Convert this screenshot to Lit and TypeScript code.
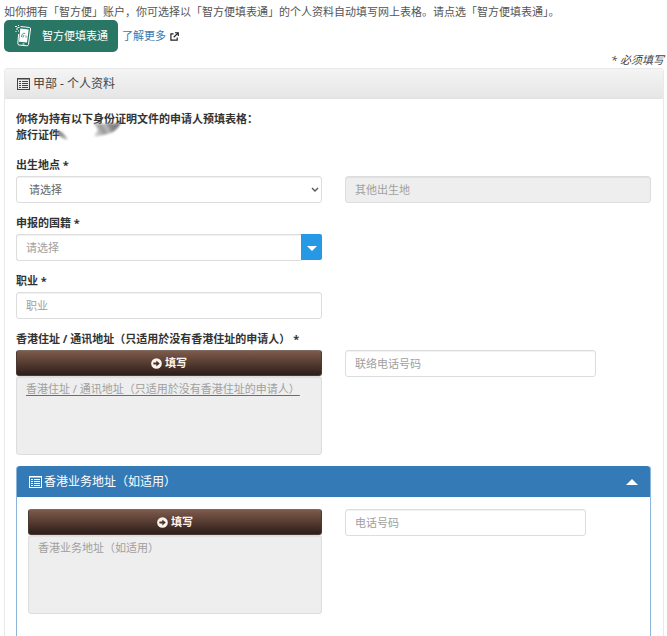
import { LitElement, html, css, svg } from "lit";
import { customElement, property, state } from "lit/decorators.js";

const listIcon = html`<svg class="icon" viewBox="0 0 13 12" width="13" height="12" aria-hidden="true">
  <rect x="0.5" y="0.5" width="12" height="11" fill="none" stroke="currentColor"></rect>
  <path d="M1 1.5h11" stroke="currentColor" opacity="0.5"></path>
  <path d="M2 3.5h2M5 3.5h6M2 5.5h2M5 5.5h6M2 7.5h2M5 7.5h6M2 9.5h2M5 9.5h6" stroke="currentColor"></path>
</svg>`;

@customElement("fill-button")
export class FillButton extends LitElement {
  static styles = css`
    :host { display: block; }
    .fill {
      display: flex; align-items: center; justify-content: center; gap: 3px;
      box-sizing: border-box; width: 100%; height: 26px; padding: 0;
      border: 1px solid #4b3a33; border-top-color: #7d6a60; border-radius: 3px;
      background: linear-gradient(#7d5a4c, #563c31 50%, #2c1e19);
      color: #fff5ee; font: bold 11px/16px "Noto Sans", "Noto Sans CJK SC", sans-serif;
      cursor: pointer;
    }
  `;
  render() {
    return html`<button class="fill" type="button">
      <svg viewBox="0 0 12 12" width="11" height="11" aria-hidden="true">
        <circle cx="6" cy="6" r="5.8" fill="currentColor"></circle>
        <path d="M2.6 4.9h3.2V2.8L9.6 6 5.8 9.2V7.1H2.6z" fill="#4b342b"></path>
      </svg>填写</button>`;
  }
}

@customElement("app-root")
export class AppRoot extends LitElement {
  @property() section = "甲部 - 个人资料";
  @state() private open = true;

  static styles = css`
    :host {
      display: block; box-sizing: border-box; height: 100vh; overflow: hidden;
      padding: 4px 3px 0 4px; background: #fff; color: #555;
      font: 11px/16px "Noto Sans", "Noto Sans CJK SC", sans-serif;
    }
    *, *::before { box-sizing: border-box; }
    p, h1, h2 { margin: 0; }
    input, textarea, select, button { font: inherit; }
    .actions { display: flex; align-items: center; gap: 4px; }
    .smart {
      display: flex; align-items: center; gap: 10px; height: 32px; padding: 0 10px;
      border: 0; border-radius: 5px; background: #2a7665; color: #fff; cursor: pointer;
    }
    .more { display: flex; align-items: center; gap: 4px; color: #3a78b0; text-decoration: none; }
    .required { text-align: right; font-style: italic; color: #444; }
    .panel { border: 1px solid #e9e9e9; border-radius: 3px; }
    .head {
      display: flex; align-items: center; gap: 3px; height: 30px; padding: 0 12px;
      border-bottom: 1px solid #e2e2e2; background: linear-gradient(#f4f4f4, #e6e6e6);
      font-size: 12px; font-weight: normal; color: #444;
    }
    .icon { flex: none; }
    .body { padding: 12px 12px 0 11px; }
    .notice { position: relative; margin-bottom: 14px; font-weight: bold; color: #333; }
    .smudge { position: absolute; left: 36px; top: 5px; }
    .grid { display: grid; grid-template-columns: 1fr 1fr; column-gap: 23px; }
    .field { margin-bottom: 12px; }
    .end { align-self: end; }
    .label { display: block; height: 19px; font-weight: bold; color: #333; }
    .control {
      display: block; width: 100%; height: 27px; padding: 0 9px; margin: 0;
      border: 1px solid #ddd; border-radius: 3px; background: #fff; color: #666;
      box-shadow: inset 0 1px 1px rgba(0, 0, 0, 0.06);
    }
    .control::placeholder { color: #a0a0a0; opacity: 1; }
    .control:disabled, .area { background: #eee; }
    .pick { position: relative; }
    .select { appearance: none; padding-left: 12px; }
    .chevron { position: absolute; right: 3px; top: 11px; pointer-events: none; }
    .combo { display: flex; }
    .combo .control { flex: 1; min-width: 0; border-radius: 3px 0 0 3px; border-right: 0; }
    .drop {
      display: flex; align-items: center; justify-content: center; width: 21px; height: 26px;
      padding: 3px 0 0; border: 0; border-radius: 0 2px 2px 0; background: #2699e6; cursor: pointer;
    }
    .area { height: 79px; padding: 4px 9px; resize: none; }
    .linked::placeholder { text-decoration: underline 1px #3a78b0; text-underline-offset: 2px; }
    .address { margin-bottom: 11px; }
    .phone { width: 82%; }
    .sub { border: 1px solid #8db5da; border-top: 0; border-radius: 3px; }
    .subhead {
      display: flex; align-items: center; gap: 2px; width: 100%; height: 31px; padding: 0 12px;
      border: 0; border-radius: 3px 3px 0 0; background: #337ab7; color: #fff;
      font-size: 12px; text-align: left; cursor: pointer;
    }
    .title { flex: 1; }
    .subbody { height: 200px; padding: 12px 11px 0; }
  `;

  render() {
    return html`
      <p>如你拥有「智方便」账户，你可选择以「智方便填表通」的个人资料自动填写网上表格。请点选「智方便填表通」。</p>
      <div class="actions">
        <button class="smart" type="button">
          <svg viewBox="0 0 18 24" width="18" height="24" fill="none" stroke="#fff" aria-hidden="true">
            <path d="M6.5 2.5 15.5 3.5Q16.7 3.8 16.5 5L14.5 20.5Q14.2 22 12.8 21.8L5 21Q3.7 20.7 3.8 19.4L4.6 10"></path>
            <path d="M6.3 4.5 14.7 5.4 13 18.5 5 17.7z" fill="#fff" stroke="none"></path>
            <path d="M7.5 13Q8 8.5 11 9.5M8.8 13.5 10 11M12 13.5V11.5" stroke="#2a7665" stroke-width="0.8"></path>
            <path d="M1 2.5h2M4 1.5h1M2 5h2M1.5 7.5h1M4 7h1M3.5 3.5h2" stroke-width="1.2"></path>
            <path d="M8.5 20h2"></path>
          </svg>智方便填表通</button>
        <a class="more" href="#more">了解更多
          <svg viewBox="0 0 10 10" width="9" height="9" fill="none" stroke="#222" stroke-width="1.3" aria-hidden="true">
            <path d="M4 2H1v7h7V6M5.5 0.8h3.7v3.7M9 1 4.2 5.8"></path>
          </svg></a>
      </div>
      <p class="required">* 必须填写</p>
      <section class="panel">
        <h1 class="head">${listIcon}${this.section}</h1>
        <div class="body">
          <div class="notice">
            <p>你将为持有以下身份证明文件的申请人预填表格：</p>
            <p>旅行证件</p>
            ${this.smudge()}
          </div>
          <div class="grid">
            <div class="field">
              <label class="label" for="birth">出生地点 *</label>
              <div class="pick">
                <select id="birth" class="control select"><option>请选择</option></select>
                <svg class="chevron" viewBox="0 0 8 6" width="8" height="6" fill="none" stroke="#555" stroke-width="1.4" aria-hidden="true"><path d="M1 1l3 3 3-3"></path></svg>
              </div>
            </div>
            <div class="field end"><input class="control" disabled placeholder="其他出生地" aria-label="其他出生地"></div>
          </div>
          <div class="grid">
            <div class="field">
              <label class="label" for="nation">申报的国籍 *</label>
              <div class="combo">
                <input id="nation" class="control" placeholder="请选择">
                <button class="drop" type="button" aria-label="展开">
                  <svg viewBox="0 0 10 5" width="10" height="5" aria-hidden="true"><path d="M0 0h10L5 5z" fill="#fff"></path></svg>
                </button>
              </div>
            </div>
          </div>
          <div class="grid">
            <div class="field">
              <label class="label" for="job">职业 *</label>
              <input id="job" class="control" placeholder="职业">
            </div>
          </div>
          <label class="label" for="home">香港住址 / 通讯地址（只适用於没有香港住址的申请人） *</label>
          <div class="grid address">
            <div>
              <fill-button></fill-button>
              <textarea id="home" class="control area linked" readonly placeholder="香港住址 / 通讯地址（只适用於没有香港住址的申请人）"></textarea>
            </div>
            <div><input class="control phone" placeholder="联络电话号码" aria-label="联络电话号码"></div>
          </div>
          <section class="sub">
            <button class="subhead" type="button" aria-expanded=${this.open} @click=${() => (this.open = !this.open)}>
              ${listIcon}<span class="title">香港业务地址（如适用）</span>
              <svg viewBox="0 0 12 6" width="12" height="6" aria-hidden="true"><path d="M0 6h12L6 0z" fill="#fff"></path></svg>
            </button>
            ${this.open ? html`<div class="subbody grid">
              <div>
                <fill-button></fill-button>
                <textarea class="control area" readonly placeholder="香港业务地址（如适用）" aria-label="香港业务地址"></textarea>
              </div>
              <div><input class="control phone" placeholder="电话号码" aria-label="电话号码"></div>
            </div>` : null}
          </section>
        </div>
      </section>`;
  }

  private smudge() {
    return html`<svg class="smudge" viewBox="0 0 74 30" width="74" height="30" aria-hidden="true">
      ${svg`<defs>
        <linearGradient id="fan" x1="0" y1="0.6" x2="1" y2="0.3">
          <stop offset="0" stop-color="#ddd"></stop><stop offset="0.35" stop-color="#999"></stop>
          <stop offset="0.5" stop-color="#bbb"></stop><stop offset="0.65" stop-color="#888"></stop>
          <stop offset="1" stop-color="#777"></stop>
        </linearGradient>
        <linearGradient id="tail" x1="0" y1="0" x2="1" y2="1">
          <stop offset="0" stop-color="#555"></stop><stop offset="1" stop-color="#ccc"></stop>
        </linearGradient>
        <filter id="soft"><feGaussianBlur stdDeviation="0.8"></feGaussianBlur></filter>
      </defs>
      <path d="M41 7Q45 11 46 14L42 19Q43 22 47 20L59 17Q67 13 69 6Q62 9 57 7Q50 9 41 7z" fill="url(#fan)" filter="url(#soft)"></path>
      <path d="M4 25 6 20 12 25v4H4z" fill="#fff"></path>
      <path d="M3 14Q12 15 16 24Q8 23 3 14z" fill="url(#tail)" filter="url(#soft)"></path>`}
    </svg>`;
  }
}
